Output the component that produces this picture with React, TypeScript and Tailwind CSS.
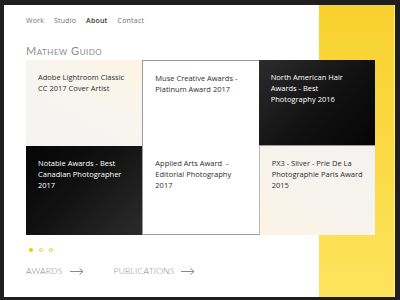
const awards = [
  { text: "Adobe Lightroom Classic CC 2017 Cover Artist", tone: "cream1" },
  { text: "Muse Creative Awards - Platinum Award 2017", tone: "white" },
  { text: "North American Hair Awards - Best Photography 2016", tone: "dark1" },
  { text: "Notable Awards - Best Canadian Photographer 2017", tone: "dark2" },
  { text: "Applied Arts Award  - Editorial Photography 2017", tone: "white" },
  { text: "PX3 - Silver - Prie De La Photographie Paris Award 2015", tone: "cream2" },
];

const toneClass: Record<string, string> = {
  cream1: "bg-[linear-gradient(30deg,#f4f3f1_0%,#f7f5f0_50%,#fdf5e3_100%)] text-[#2e2e2e]",
  cream2: "bg-[linear-gradient(210deg,#f3f2f0_0%,#f7f4ee_50%,#fcf4e4_100%)] text-[#2e2e2e]",
  dark1: "bg-[linear-gradient(135deg,#2c2c2c_0%,#111111_55%,#050505_100%)] text-white",
  dark2: "bg-[linear-gradient(135deg,#050505_0%,#111111_45%,#2c2c2c_100%)] text-white",
  white: "bg-white text-[#2e2e2e]",
};

function Arrow() {
  return (
    <svg width="14" height="7" viewBox="0 0 14 7" fill="none" stroke="#8a8a8a" strokeWidth="1">
      <path d="M0 3.5H13" />
      <path d="M9.5 0.5L13 3.5L9.5 6.5" />
    </svg>
  );
}

export default function App() {
  return (
    <div className="w-[400px] h-[300px] bg-[#1f1f1f] pt-[5px] pl-[4px] pr-[5px] pb-[3px] font-['Open_Sans',sans-serif]">
      <div className="grid h-full w-full bg-white">
        <div className="col-start-1 row-start-1 justify-self-end h-full w-[76px] bg-[linear-gradient(180deg,#f7d12e_0%,#fad944_50%,#fee35d_100%)] border-r border-[#fdf07c]" />
        <div className="col-start-1 row-start-1 flex flex-col pl-[22px] pt-[11px]">
          <nav className="flex gap-[10px] text-[7px] leading-[10px] tracking-[0.2px] text-[#6f6f6f]">
            <span>Work</span>
            <span>Studio</span>
            <span className="font-semibold text-[#333]">About</span>
            <span>Contact</span>
          </nav>
          <h1 className="mt-[18px] text-[11px] leading-[14px] font-normal text-[#8c8c8c] [font-variant:small-caps] tracking-[0.5px] font-['Lato',sans-serif]">
            Mathew Guido
          </h1>
          <div className="mt-[2px] grid w-[349px] grid-cols-3 grid-rows-[86px_89px]">
            {awards.map((a, i) => (
              <div
                key={i}
                className={`${toneClass[a.tone]} ${i === 1 ? "border-l border-t border-[#9a9a9a]" : ""} ${i === 4 ? "border-l border-b border-[#9a9a9a]" : ""} ${i === 2 ? "border-b border-[#9a9a9a]" : ""} ${i === 5 ? "border-l border-[#b8b8b8]" : ""} whitespace-pre-wrap pl-[12px] pr-[11px] pt-[12px] text-[7.5px] leading-[11px] font-medium tracking-[0px]`}
              >
                {a.text}
              </div>
            ))}
          </div>
          <div className="mt-[13px] flex items-center gap-[6px] pl-[3px]">
            <span className="h-[4px] w-[4px] rounded-full bg-[#f5c900]" />
            <span className="h-[4px] w-[4px] rounded-full border border-[#f3cf3a]" />
            <span className="h-[4px] w-[4px] rounded-full border border-[#f3cf3a]" />
          </div>
          <div className="mt-[13px] flex items-center text-[8.5px] leading-[12px] font-light tracking-[0.2px] text-[#8a8a8a] font-['Lato',sans-serif]">
            <span>AWARDS</span>
            <span className="ml-[7px]"><Arrow /></span>
            <span className="ml-[30px]">PUBLICATIONS</span>
            <span className="ml-[7px]"><Arrow /></span>
          </div>
        </div>
      </div>
    </div>
  );
}
